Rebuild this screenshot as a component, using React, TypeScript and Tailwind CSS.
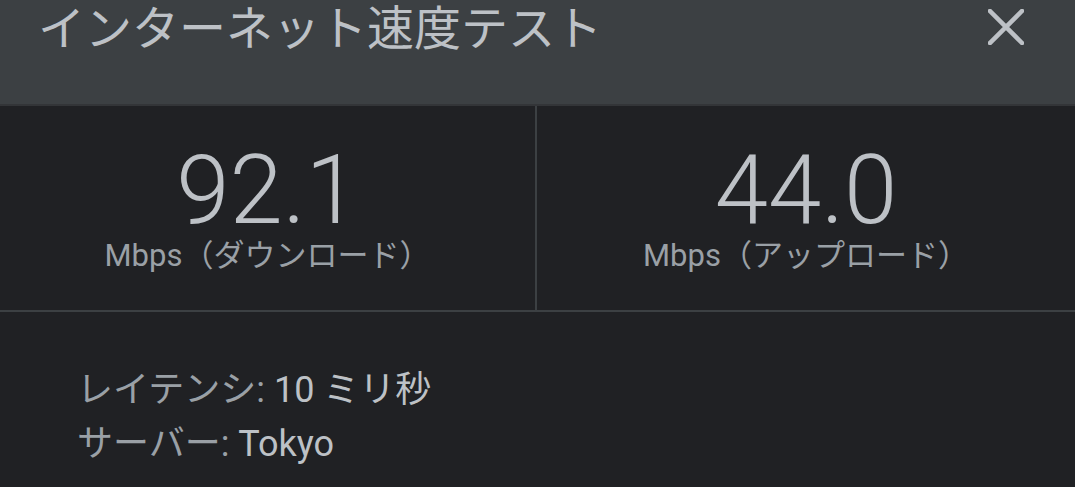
import React from "react";

const font = { fontFamily: 'Roboto, "Noto Sans CJK JP", sans-serif' };

const Stat = ({ value, label, border }: { value: string; label: string; border?: boolean }) => (
  <div
    className={`flex flex-col items-center pt-[36px] ${border ? "border-r-2 border-[#3c4043]" : ""}`}
  >
    <div className="text-[96px] leading-none text-[#bdc1c6] font-light">{value}</div>
    <div className="text-[31px] leading-none text-[#9aa0a6] mt-[2px]">{label}</div>
  </div>
);

export default function App() {
  return (
    <div className="w-[1075px] h-[487px] bg-[#202124] overflow-hidden" style={font}>
      {/* Header */}
      <div className="h-[106px] bg-[#3c4043] border-b-2 border-[#333538] flex items-start justify-between pl-[38px] pr-[51px]">
        <div className="text-[47px] leading-none text-[#bdc1c6] pt-[5px]">
          インターネット速度テスト
        </div>
        <svg width="36" height="36" viewBox="0 0 36 36" className="mt-[9px]">
          <path d="M2 2 L34 34 M34 2 L2 34" stroke="#bdc1c6" strokeWidth="4.5" strokeLinecap="square" />
        </svg>
      </div>

      {/* Stats */}
      <div className="grid grid-cols-[537px_1fr] h-[206px] border-b-2 border-[#3c4043]">
        <Stat value="92.1" label="Mbps（ダウンロード）" border />
        <Stat value="44.0" label="Mbps（アップロード）" />
      </div>

      {/* Details */}
      <div className="pl-[77px] pt-[51px] text-[36px] leading-[54px]">
        <div>
          <span className="text-[#9aa0a6]">レイテンシ: </span>
          <span className="text-[#bdc1c6]">10 ミリ秒</span>
        </div>
        <div>
          <span className="text-[#9aa0a6]">サーバー: </span>
          <span className="text-[#bdc1c6]">Tokyo</span>
        </div>
      </div>
    </div>
  );
}
